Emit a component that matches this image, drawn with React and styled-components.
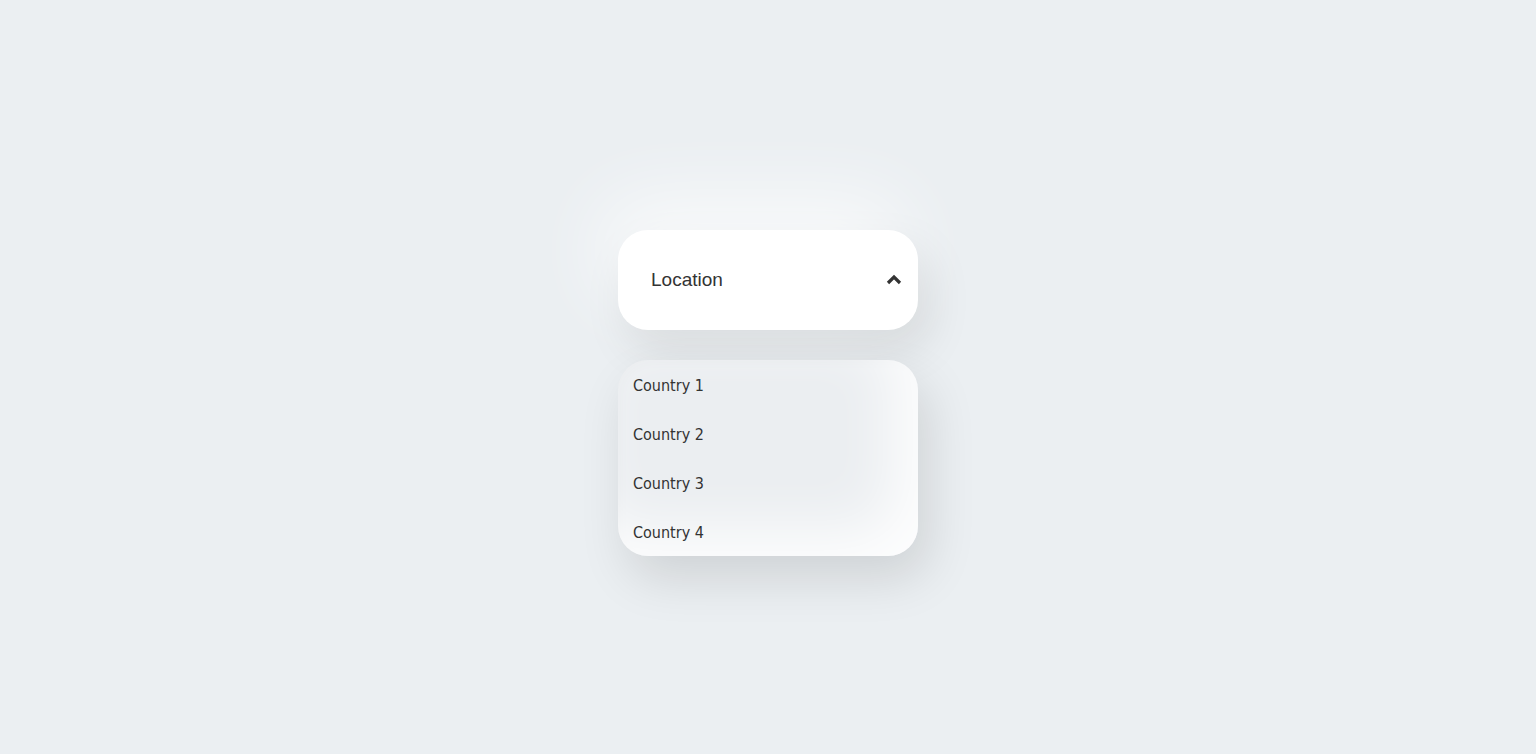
import { useState } from 'react';
import styled, { createGlobalStyle } from 'styled-components';

const GlobalStyle = createGlobalStyle`
  html, body {
    margin: 0;
    padding: 0;
    background: #ebeff2;
  }
`;

const Page = styled.div`
  min-height: 100vh;
  display: flex;
  justify-content: center;
  padding-top: 230px;
  box-sizing: border-box;
`;

const Dropdown = styled.div`
  width: 300px;
  display: flex;
  flex-direction: column;
  gap: 30px;
`;

const Header = styled.div`
  height: 100px;
  border-radius: 30px;
  background: #fff;
  display: flex;
  align-items: center;
  justify-content: space-between;
  padding: 0 16px 0 33px;
  box-sizing: border-box;
  cursor: pointer;
  box-shadow: -15px -30px 80px rgba(255, 255, 255, 0.75), 10px 20px 45px rgba(0, 0, 0, 0.1);
`;

const Label = styled.span`
  font-family: 'Liberation Sans', Arial, sans-serif;
  font-size: 19px;
  color: #333;
`;

const Chevron = styled.svg`
  width: 16px;
  height: 12px;
`;

const List = styled.ul`
  list-style: none;
  margin: 0;
  padding: 0;
  border-radius: 30px;
  background: #ebeef1;
  overflow: hidden;
  box-shadow: inset -25px -25px 60px rgba(255, 255, 255, 0.9),
    inset 4px 4px 10px rgba(0, 0, 0, 0.02),
    10px 22px 50px rgba(0, 0, 0, 0.12);
`;

const Item = styled.li`
  height: 49px;
  display: flex;
  align-items: center;
  padding: 1px 0 0 15px;
  box-sizing: border-box;
  font-family: 'DejaVu Sans Condensed', 'DejaVu Sans', sans-serif;
  font-size: 16px;
  color: #333;
  cursor: pointer;
`;

const countries = ['Country 1', 'Country 2', 'Country 3', 'Country 4'];

const App = () => {
  const [open, setOpen] = useState(true);

  return (
    <>
      <GlobalStyle />
      <Page>
        <Dropdown>
          <Header onClick={() => setOpen(!open)}>
            <Label>Location</Label>
            <Chevron viewBox="0 0 16 12">
              <polyline
                points={open ? '2,9 8,3 14,9' : '2,3 8,9 14,3'}
                fill="none"
                stroke="#333"
                strokeWidth="3.2"
                strokeLinejoin="miter"
              />
            </Chevron>
          </Header>
          {open && (
            <List>
              {countries.map((c) => (
                <Item key={c}>{c}</Item>
              ))}
            </List>
          )}
        </Dropdown>
      </Page>
    </>
  );
};

export default App;
